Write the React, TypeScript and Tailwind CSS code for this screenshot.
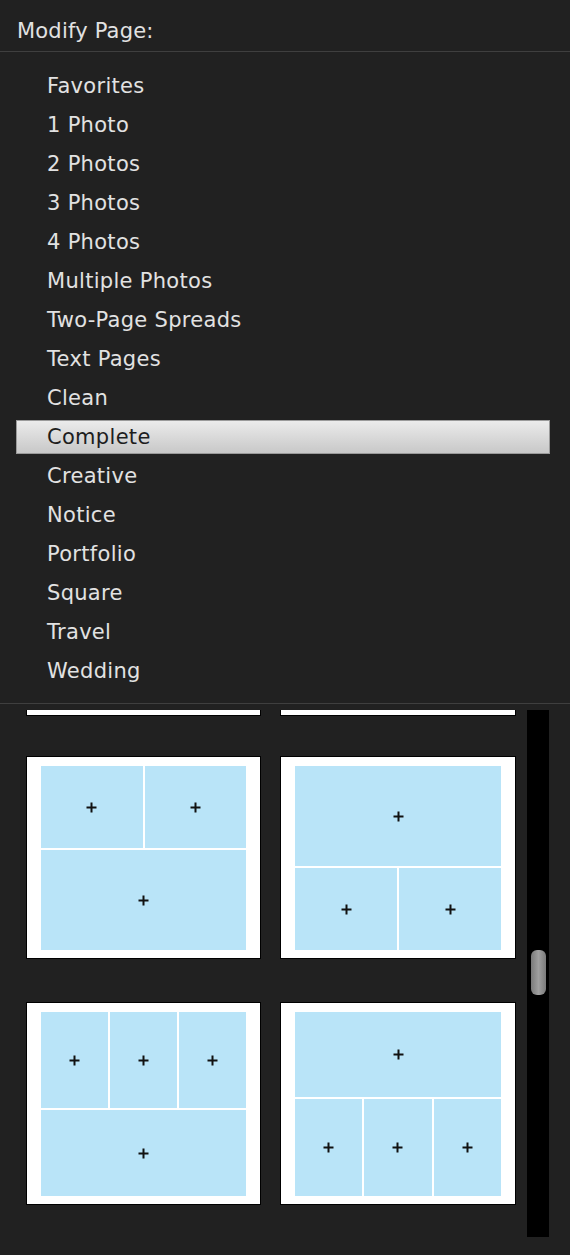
import React from 'react';

const items = [
    'Favorites',
    '1 Photo',
    '2 Photos',
    '3 Photos',
    '4 Photos',
    'Multiple Photos',
    'Two-Page Spreads',
    'Text Pages',
    'Clean',
    'Complete',
    'Creative',
    'Notice',
    'Portfolio',
    'Square',
    'Travel',
    'Wedding',
];

const selected = 'Complete';

function Plus() {
    return (
        <svg width="11" height="11" viewBox="0 0 11 11" className="block">
            <path d="M5.5 0.5v10M0.5 5.5h10" stroke="#111" strokeWidth="2" />
        </svg>
    );
}

// top / bottom: band heights, topCols / bottomCols: how many cells in each band
function Thumb({ top, bottom, topCols, bottomCols }: { top: number; bottom: number; topCols: number; bottomCols: number }) {
    return (
        <div className="h-[203px] border border-black bg-white pt-[9px] pb-[8px] px-[14px]">
            <div className="flex h-full flex-col gap-[2px] bg-white">
                <div className="flex gap-[2px]" style={{ height: top }}>
                    {Array.from({ length: topCols }).map((_, i) => (
                        <div key={i} className="flex flex-1 items-center justify-center bg-[#b9e4f8]">
                            <Plus />
                        </div>
                    ))}
                </div>
                <div className="flex gap-[2px]" style={{ height: bottom }}>
                    {Array.from({ length: bottomCols }).map((_, i) => (
                        <div key={i} className="flex flex-1 items-center justify-center bg-[#b9e4f8]">
                            <Plus />
                        </div>
                    ))}
                </div>
            </div>
        </div>
    );
}

export default function App() {
    return (
        <div className="h-[1255px] w-[570px] overflow-hidden bg-[#212121] font-['DejaVu_Sans',sans-serif] text-[#e2e2e2]">
            <div className="flex h-[52px] items-center border-b border-[#3f3f3f] pl-[17px] pt-[12px] text-[21px] tracking-[0.2px]">
                Modify Page:
            </div>

            <div className="pt-[14px] pb-[13px]">
                {items.map((item) => (
                    <div key={item} className="flex h-[39px] items-center pl-[16px] pr-[20px]">
                        <div
                            className={
                                item === selected
                                    ? 'flex h-[34px] w-full items-center border border-[#9a9a9a] bg-gradient-to-b from-[#ebebeb] to-[#c8c8c8] pl-[30px] pt-[3px] text-[21px] tracking-[0.3px] text-[#1e1e1e]'
                                    : 'flex h-[34px] w-full items-center pl-[31px] pt-[3px] text-[21px] tracking-[0.3px]'
                            }
                        >
                            {item}
                        </div>
                    </div>
                ))}
            </div>

            <div className="border-t border-[#3f3f3f]">
                <div className="flex pt-[6px]">
                    <div className="w-[506px] pl-[26px]">
                        <div className="grid grid-cols-[235px_236px] gap-x-[19px]">
                            <div className="h-[6px] border border-t-0 border-black bg-white" />
                            <div className="h-[6px] border border-t-0 border-black bg-white" />
                        </div>
                        <div className="mt-[40px] grid grid-cols-[235px_236px] gap-x-[19px] gap-y-[43px]">
                            <Thumb top={82} bottom={100} topCols={2} bottomCols={1} />
                            <Thumb top={100} bottom={82} topCols={1} bottomCols={2} />
                            <Thumb top={96} bottom={86} topCols={3} bottomCols={1} />
                            <Thumb top={85} bottom={97} topCols={1} bottomCols={3} />
                        </div>
                    </div>
                    <div className="ml-[21px] h-[527px] w-[22px] bg-black pt-[240px] pl-[4px] pr-[3px]">
                        <div className="h-[45px] rounded-[6px] bg-gradient-to-r from-[#7a7a7a] via-[#a0a0a0] to-[#7a7a7a]" />
                    </div>
                </div>
            </div>
        </div>
    );
}
